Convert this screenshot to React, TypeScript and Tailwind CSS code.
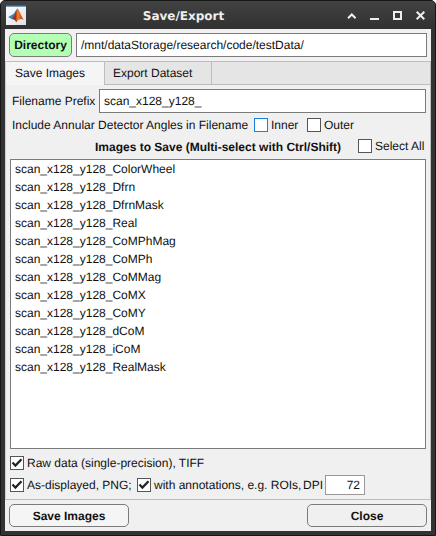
import type { ReactNode } from "react";

const images = [
  "ColorWheel", "Dfrn", "DfrnMask", "Real", "CoMPhMag", "CoMPh",
  "CoMMag", "CoMX", "CoMY", "dCoM", "iCoM", "RealMask",
];

function Box({ checked = false, focused = false }: { checked?: boolean; focused?: boolean }) {
  return (
    <span className={`block size-[14px] shrink-0 border bg-white ${focused ? "border-[#1583dc]" : "border-[#555555]"}`}>
      {checked && (
        <svg viewBox="0 0 12 12" className="block size-3" fill="none" stroke="#222222" strokeWidth="2.2">
          <path d="M1.5 5.6 L4.4 8.6 L10.5 2.2" />
        </svg>
      )}
    </span>
  );
}

function Label({ children, className = "" }: { children: ReactNode; className?: string }) {
  return <span className={`shrink-0 whitespace-nowrap ${className}`}>{children}</span>;
}

function MatlabIcon() {
  return (
    <svg viewBox="0 0 20 20" className="size-5 shrink-0">
      <defs>
        <linearGradient id="bg" x1="0" y1="0" x2="1" y2="1">
          <stop offset="0" stopColor="#ffffff" />
          <stop offset="1" stopColor="#dfe1e6" />
        </linearGradient>
        <linearGradient id="flame" x1="0" y1="0" x2="1" y2="0">
          <stop offset="0" stopColor="#6b1f22" />
          <stop offset="0.3" stopColor="#a8321c" />
          <stop offset="0.5" stopColor="#f0862a" />
          <stop offset="0.65" stopColor="#e8641e" />
          <stop offset="1" stopColor="#b8301a" />
        </linearGradient>
      </defs>
      <rect width="20" height="20" fill="url(#bg)" />
      <rect width="20" height="2" fill="#6b9cc4" />
      <rect y="0" width="20" height="1" fill="#3b6287" />
      <path d="M2.2 12 L7 9.3 C8.6 8.6 9.4 5.6 11.4 3.6 L10.4 11 L6 14.2 Z" fill="#3f83b5" />
      <path d="M6 14.2 C8.6 12.4 9.4 6.4 11.4 3.6 C13.4 4.6 14.8 11 17.8 15 C15.4 13.4 13.4 13.6 10.2 17.4 C9.2 14.8 8 14 6 14.2 Z" fill="url(#flame)" />
    </svg>
  );
}

export default function App() {
  return (
    <div className="h-[536px] w-[436px] bg-white font-['Liberation_Sans',Arial,sans-serif] text-[12px] leading-[18px] text-[#111111] [text-rendering:geometricPrecision]">
      <div className="flex h-full flex-col overflow-hidden rounded-t-[5px] border border-[#161616] bg-[#333333] px-1 pb-1">
        <header className="-mx-1 flex h-7 shrink-0 items-center bg-linear-to-b from-[#424242] to-[#313131] pr-2 pl-[5px]">
          <MatlabIcon />
          <h1 className="flex-1 pt-px pr-[6px] text-center font-['DejaVu_Sans',sans-serif] text-[12px] font-bold text-[#eeeeec]">
            Save/Export
          </h1>
          <svg viewBox="0 0 80 12" className="h-3 w-20 shrink-0" fill="none" stroke="#eeeeec" strokeWidth="2">
            <path d="M1 9.3 L4.8 5.5 L8.6 9.3" />
            <path d="M23 10 H32" />
            <rect x="47" y="3" width="7" height="7" />
            <path d="M69.7 2.7 L77.3 10.3 M77.3 2.7 L69.7 10.3" />
          </svg>
        </header>
        <main className="flex flex-1 flex-col bg-[#f0f0f0]">
          <div className="flex h-8 items-start gap-1 bg-[#f3f0f1] px-1 pt-1">
            <button className="h-6 w-[63px] rounded-[5px] border border-[#7b7b7b] bg-[#b3ffb3] font-bold [text-rendering:geometricPrecision]">Directory</button>
            <div className="flex h-6 flex-1 items-center border border-[#7b7b7b] bg-white pl-1">
              /mnt/dataStorage/research/code/testData/
            </div>
          </div>
          <section className="flex h-[439px] flex-col border border-[#bdbdbd] border-l-[#d0d0d0]">
            <nav className="flex h-[23px] shrink-0 bg-[#e5e5e5]">
              <div className="w-[99px] border-r border-[#bdbdbd] bg-[#f5f5f5] pt-[2px] pl-[9px]">Save Images</div>
              <div className="w-[107px] border-r border-b border-[#bdbdbd] pt-[2px] pl-2">Export Dataset</div>
              <div className="flex-1 border-b border-[#bdbdbd]" />
            </nav>
            <div className="flex h-7 items-end pr-1 pl-1.5">
              <Label className="w-[87px] pb-[3px]">Filename Prefix</Label>
              <div className="flex h-6 flex-1 items-center border border-[#7b7b7b] bg-white pl-1">scan_x128_y128_</div>
            </div>
            <div className="flex h-6 items-center pl-1.5">
              <Label className="w-[242px]">Include Annular Detector Angles in Filename</Label>
              <Box focused />
              <Label className="w-[39px] pl-[3px]">Inner</Label>
              <Box />
              <Label className="pl-[3px]">Outer</Label>
            </div>
            <div className="flex h-[22px] items-start pl-[89px]">
              <Label className="w-[263px] pt-px font-bold">Images to Save (Multi-select with Ctrl/Shift)</Label>
              <div className="pt-[2px]"><Box /></div>
              <Label className="pl-[3px]">Select All</Label>
            </div>
            <ul className="mx-1 h-[290px] border border-[#7b7b7b] bg-white pl-1">
              {images.map((name) => (
                <li key={name} className="h-[18px]">scan_x128_y128_{name}</li>
              ))}
            </ul>
            <div className="mt-[3px] flex h-[22px] items-center pl-1">
              <Box checked />
              <Label className="pl-[3px]">Raw data (single-precision), TIFF</Label>
            </div>
            <div className="flex h-[22px] items-center pl-1">
              <Box checked />
              <Label className="w-[113px] pl-[3px]">As-displayed, PNG;</Label>
              <Box checked />
              <Label className="w-[152px] pl-[3px]">with annotations, e.g. ROIs,</Label>
              <Label className="w-[22px]">DPI</Label>
              <div className="flex h-5 w-10 items-center justify-end border border-[#999999] bg-white pr-1">72</div>
            </div>
          </section>
          <footer className="flex items-start justify-between px-1 pt-1">
            <button className="h-[23px] w-[120px] rounded-[5px] border border-[#7b7b7b] bg-[#f5f5f5] font-bold [text-rendering:geometricPrecision]">Save Images</button>
            <button className="h-[23px] w-[120px] rounded-[5px] border border-[#7b7b7b] bg-[#f0f0f0] font-bold [text-rendering:geometricPrecision]">Close</button>
          </footer>
        </main>
      </div>
    </div>
  );
}
